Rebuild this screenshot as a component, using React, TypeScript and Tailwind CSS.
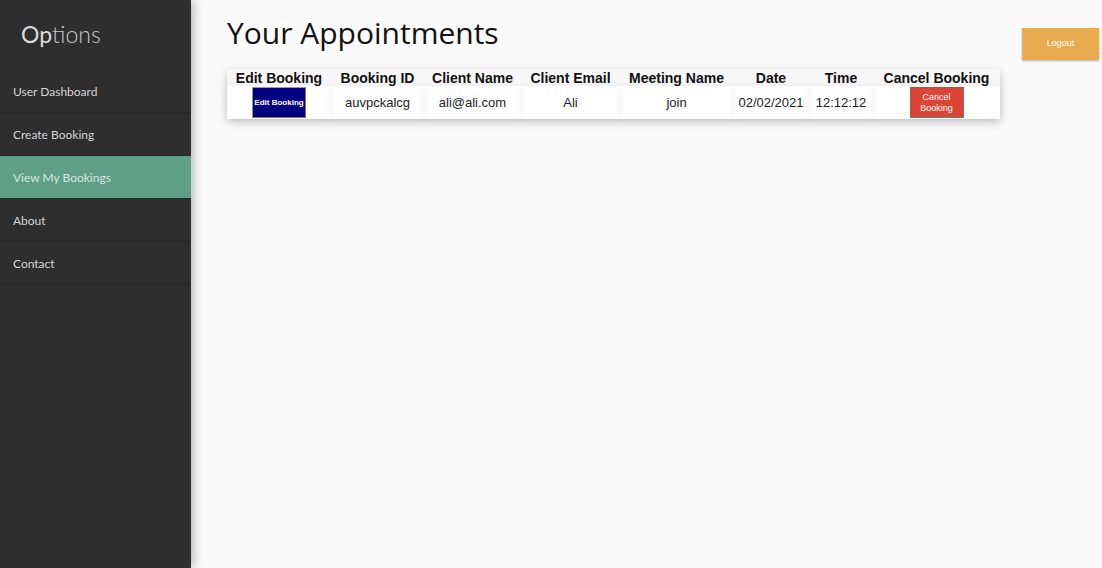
const navItems = ["User Dashboard", "Create Booking", "View My Bookings", "About", "Contact"];

const columns = [
  { label: "Edit Booking", w: "w-[104px]" },
  { label: "Booking ID", w: "w-[93px]" },
  { label: "Client Name", w: "w-[97px]" },
  { label: "Client Email", w: "w-[99px]" },
  { label: "Meeting Name", w: "w-[113px]" },
  { label: "Date", w: "w-[76px]" },
  { label: "Time", w: "w-[64px]" },
  { label: "Cancel Booking", w: "w-[127px]" },
];

const cell = "h-[33px] text-center text-[13px] text-[#222] shadow-[0_0_8px_rgba(0,0,0,0.06)]";

export default function App() {
  return (
    <div className="flex h-[568px] w-[1102px] overflow-hidden bg-[#fafafa] font-['Liberation_Sans',Arial,sans-serif]">
      <aside className="relative z-10 flex w-[191px] shrink-0 flex-col bg-[#2e2e2e] shadow-[3px_0_9px_rgba(0,0,0,0.25)] font-['Lato',sans-serif]">
        <div className="flex h-[68px] items-center pl-[21px] text-[23px] font-light text-[#c9c9c9]">
          <span className="font-normal text-[#dcdcdc]">Op</span>tions
        </div>
        <nav className="mt-[2px] flex flex-col">
          {navItems.map((item) => (
            <div
              key={item}
              className={
                "flex h-[43px] items-center border-b border-[#272727] pl-[13px] pt-[1px] text-[12px] " +
                (item === "View My Bookings" ? "bg-[#5f9e87] text-[#d9e6e0]" : "text-[#d4d4d4]")
              }
            >
              {item}
            </div>
          ))}
        </nav>
      </aside>

      <main className="flex flex-1 items-start pl-[36px]">
        <section className="flex flex-col">
          <h1 className="mt-[11px] h-[44px] text-[30px] leading-[44px] text-[#111] font-['Open_Sans',sans-serif]">
            Your Appointments
          </h1>
          <table className="mt-[14px] w-[773px] table-fixed border-collapse bg-white shadow-[0_3px_9px_rgba(0,0,0,0.22)]">
            <thead>
              <tr className="h-[17px] bg-[#f7f7f7]">
                {columns.map((c) => (
                  <th key={c.label} className={c.w + " pt-[1px] text-center text-[14px] font-bold leading-[16px] text-[#111]"}>
                    {c.label}
                  </th>
                ))}
              </tr>
            </thead>
            <tbody>
              <tr>
                <td className={cell}>
                  <button className="mx-auto flex h-[31px] w-[54px] items-center justify-center whitespace-nowrap border border-[#777] border-t-[#999] border-l-[#999] bg-[#000080] text-[8px] font-bold text-white">
                    Edit Booking
                  </button>
                </td>
                <td className={cell}>auvpckalcg</td>
                <td className={cell}>ali@ali.com</td>
                <td className={cell}>Ali</td>
                <td className={cell}>join</td>
                <td className={cell}>02/02/2021</td>
                <td className={cell}>12:12:12</td>
                <td className={cell}>
                  <button className="mx-auto flex h-[31px] w-[54px] items-center justify-center border border-[#777] border-t-[#c44] border-l-[#c44] bg-[#db4535] text-[9px] leading-[11px] text-white">
                    Cancel
                    <br />
                    Booking
                  </button>
                </td>
              </tr>
            </tbody>
          </table>
        </section>
        <button className="ml-auto mr-[3px] mt-[28px] h-[32px] w-[77px] bg-[#e8ac4e] text-[9px] text-white shadow-[0_1px_2px_rgba(0,0,0,0.3)]">
          Logout
        </button>
      </main>
    </div>
  );
}
